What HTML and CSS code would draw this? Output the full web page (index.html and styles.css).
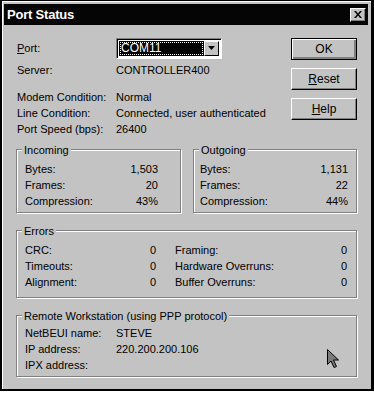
FILE: index.html
```html
<!DOCTYPE html>
<html lang="en">

<head>
    <meta charset="UTF-8">
    <meta name="viewport" content="width=device-width, initial-scale=1.0">
    <title>Port Status</title>
    <link rel="stylesheet" href="styles.css">
</head>

<body>
    <div class="window">
        <div class="titlebar">
            <span class="title">Port Status</span>
            <div class="close">
                <svg width="8" height="7" viewBox="0 0 8 7">
                    <path d="M0 0h2l2 2.5L6 0h2L5 3.5 8 7H6L4 4.5 2 7H0l3-3.5z" fill="#000" />
                </svg>
            </div>
        </div>

        <div class="body">
            <div class="top">
                <div class="info">
                    <div class="info-row port-row">
                        <span><u>P</u>ort:</span>
                        <div class="combo">
                            <div class="combo-text"><span class="focus">COM11</span></div>
                            <div class="combo-btn">
                                <svg width="7" height="4" viewBox="0 0 7 4">
                                    <path d="M0 0h7L3.5 4z" fill="#000" />
                                </svg>
                            </div>
                        </div>
                    </div>
                    <div class="info-row server-row">
                        <span>Server:</span>
                        <span>CONTROLLER400</span>
                    </div>
                    <div class="status">
                        <div class="info-row">
                            <span>Modem Condition:</span>
                            <span>Normal</span>
                        </div>
                        <div class="info-row">
                            <span>Line Condition:</span>
                            <span>Connected, user authenticated</span>
                        </div>
                        <div class="info-row">
                            <span>Port Speed (bps):</span>
                            <span>26400</span>
                        </div>
                    </div>
                </div>

                <div class="buttons">
                    <div class="btn btn-default">OK</div>
                    <div class="btn"><u>R</u>eset</div>
                    <div class="btn"><u>H</u>elp</div>
                </div>
            </div>

            <div class="counters">
                <div class="group incoming">
                    <div class="group-title">Incoming</div>
                    <div class="stat"><span>Bytes:</span><span>1,503</span></div>
                    <div class="stat"><span>Frames:</span><span>20</span></div>
                    <div class="stat"><span>Compression:</span><span>43%</span></div>
                </div>
                <div class="group outgoing">
                    <div class="group-title">Outgoing</div>
                    <div class="stat"><span>Bytes:</span><span>1,131</span></div>
                    <div class="stat"><span>Frames:</span><span>22</span></div>
                    <div class="stat"><span>Compression:</span><span>44%</span></div>
                </div>
            </div>

            <div class="group errors">
                <div class="group-title">Errors</div>
                <div class="error-grid">
                    <div class="stat"><span>CRC:</span><span>0</span></div>
                    <div class="stat"><span>Framing:</span><span>0</span></div>
                    <div class="stat"><span>Timeouts:</span><span>0</span></div>
                    <div class="stat"><span>Hardware Overruns:</span><span>0</span></div>
                    <div class="stat"><span>Alignment:</span><span>0</span></div>
                    <div class="stat"><span>Buffer Overruns:</span><span>0</span></div>
                </div>
            </div>

            <div class="group remote">
                <div class="group-title">Remote Workstation (using PPP protocol)</div>
                <div class="remote-row"><span>NetBEUI name:</span><span>STEVE</span></div>
                <div class="remote-row"><span>IP address:</span><span>220.200.200.106</span></div>
                <div class="remote-row"><span>IPX address:</span><span></span></div>
                <svg class="pointer" width="12" height="20" viewBox="0 0 12 20">
                    <path d="M0.5 0.5v15l3.5-3.5 3 6.5 2.5-1-3-6.5h5z" fill="#7a7a7a" stroke="#000" stroke-width="1" />
                </svg>
            </div>
        </div>
    </div>
</body>

</html>
```

FILE: styles.css
```css
/* div {
    border: 1px solid red;
} */

body {
    margin: 0;
    background-color: #fff;
    font-family: "Liberation Sans", Arial, sans-serif;
    font-size: 11px;
    line-height: 16px;
    color: #000;
}

.window {
    box-sizing: border-box;
    width: 374px;
    height: 391px;
    border-top: 1px solid #000;
    border-left: 2px solid #000;
    border-right: 3px solid #000;
    border-bottom: 2px solid #000;
    padding: 3px 3px 0 2px;
    background-color: #c3c3c3;
    box-shadow: inset 1px 1px 0 #fff;
}

.titlebar {
    display: flex;
    align-items: center;
    justify-content: space-between;
    height: 21px;
    padding-left: 3px;
    padding-right: 2px;
    background-color: #050505;
}

.title {
    color: #fff;
    font-size: 13px;
    font-weight: bold;
    letter-spacing: -0.2px;
}

.close {
    box-sizing: border-box;
    width: 16px;
    height: 14px;
    display: flex;
    justify-content: center;
    align-items: center;
    background-color: #c3c3c3;
    border-top: 1px solid #fff;
    border-left: 1px solid #fff;
    border-right: 1px solid #000;
    border-bottom: 1px solid #000;
    box-shadow: inset -1px -1px 0 #808080;
}

.body {
    padding: 12px 11px 0 12px;
}

.top {
    display: flex;
}

.info {
    flex: 1;
    padding-left: 1px;
}

.info-row {
    display: grid;
    grid-template-columns: 99px 1fr;
    height: 16px;
    align-items: center;
}

.port-row {
    height: 22px;
}

.server-row {
    margin-top: 3px;
}

.status {
    margin-top: 11px;
}

.combo {
    box-sizing: border-box;
    display: flex;
    width: 106px;
    height: 21px;
    padding: 2px;
    background-color: #fff;
    border-top: 1px solid #808080;
    border-left: 1px solid #808080;
    border-right: 1px solid #fff;
    border-bottom: 1px solid #fff;
    box-shadow: inset 1px 1px 0 #000;
}

.combo-text {
    flex: 1;
    display: flex;
    background-color: #000;
    padding: 1px;
}

.focus {
    flex: 1;
    color: #fff;
    font-size: 12px;
    line-height: 13px;
    padding-left: 1px;
    outline: 1px dotted #fff;
    outline-offset: -1px;
}

.combo-btn {
    box-sizing: border-box;
    width: 15px;
    display: flex;
    justify-content: center;
    align-items: center;
    background-color: #c3c3c3;
    border-top: 1px solid #fff;
    border-left: 1px solid #fff;
    border-right: 1px solid #000;
    border-bottom: 1px solid #000;
}

.buttons {
    display: flex;
    flex-direction: column;
    gap: 8px;
    margin-top: 1px;
}

.btn {
    box-sizing: border-box;
    width: 66px;
    height: 22px;
    display: flex;
    justify-content: center;
    align-items: center;
    font-size: 12px;
    border-top: 1px solid #fff;
    border-left: 1px solid #fff;
    border-right: 1px solid #000;
    border-bottom: 1px solid #000;
    box-shadow: inset -1px -1px 0 #808080;
}

.btn-default {
    border: 1px solid #000;
    box-shadow: inset 1px 1px 0 #fff, inset -2px -2px 0 #808080;
}

.counters {
    display: flex;
    gap: 12px;
    margin-top: 12px;
}

.group {
    position: relative;
    border: 1px solid #808080;
    box-shadow: inset 1px 1px 0 #fff, 1px 1px 0 #fff;
}

.group-title {
    position: absolute;
    top: -8px;
    left: 5px;
    padding: 0 2px;
    background-color: #c3c3c3;
}

.stat {
    display: flex;
    justify-content: space-between;
    height: 16px;
    align-items: center;
}

.incoming {
    width: 165px;
    box-sizing: border-box;
    padding: 11px 22px 3px 8px;
}

.outgoing {
    flex: 1;
    padding: 11px 8px 3px 6px;
}

.errors {
    margin-top: 17px;
    padding: 11px 9px 7px 8px;
}

.error-grid {
    display: grid;
    grid-template-columns: 131px 1fr;
    column-gap: 19px;
}

.remote {
    margin-top: 17px;
    padding: 9px 9px 3px 8px;
}

.remote-row {
    display: grid;
    grid-template-columns: 91px 1fr;
    height: 16px;
    align-items: center;
}

.pointer {
    position: absolute;
    left: 310px;
    top: 33px;
}
```
